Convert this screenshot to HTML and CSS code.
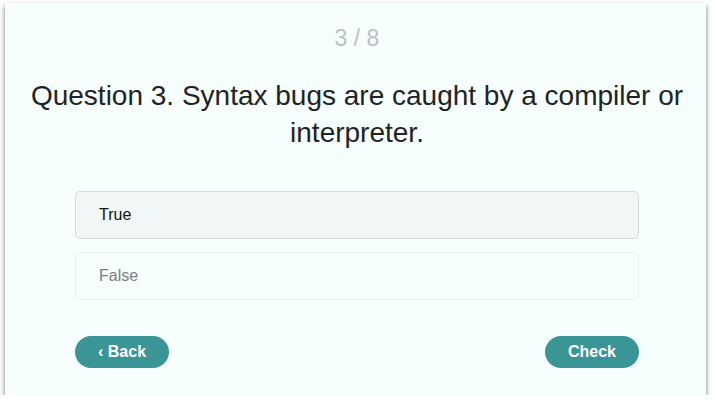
FILE: index.html
```html
<!DOCTYPE html>
<html lang="en">
<head>
    <meta charset="UTF-8">
    <meta name="viewport" content="width=device-width, initial-scale=1.0">
    <title>Quiz</title>
    <link rel="stylesheet" href="styles.css">
</head>
<body>
    <section class="quiz-card">
        <p class="progress">3 / 8</p>
        <h2 class="question">Question 3. Syntax bugs are caught by a compiler or interpreter.</h2>
        <div class="answers">
            <button type="button" class="answer selected">True</button>
            <button type="button" class="answer">False</button>
        </div>
        <div class="nav-btn">
            <button type="button" class="pill">&lsaquo; Back</button>
            <button type="button" class="pill">Check</button>
        </div>
    </section>
</body>
</html>
```

FILE: styles.css
```css
*{
    margin: 0;
    padding: 0;
    box-sizing: border-box;
}

body{
    background: #fff;
    font-family: "Liberation Sans", Arial, sans-serif;
    padding: 3px 8px 0 5px;
}

.quiz-card{
    width: 701px;
    height: 392px;
    background: #f6fefe;
    box-shadow: 0 3px 5px rgba(0, 0, 0, 0.55);
    padding: 22px 67px 0 70px;
}

.progress{
    text-align: center;
    color: #bcc2c2;
    font-size: 23px;
    line-height: 26px;
}

.question{
    margin-top: 26px;
    margin-left: -60px;
    margin-right: -60px;
    text-align: center;
    font-weight: normal;
    font-size: 28px;
    line-height: 37px;
    color: #1f2324;
}

.answers{
    margin-top: 40px;
    display: flex;
    flex-direction: column;
    gap: 13px;
}

.answer{
    height: 48px;
    text-align: left;
    padding: 0 23px;
    font-family: inherit;
    font-size: 16px;
    color: #7a7e7e;
    background: transparent;
    border: 1px solid #e6eeee;
    border-radius: 5px;
}

.answer.selected{
    color: #111;
    background: #f1f6f6;
    border-color: #d3dbdb;
}

.nav-btn{
    margin-top: 36px;
    display: flex;
    justify-content: space-between;
}

.pill{
    height: 32px;
    padding: 0 23px;
    font-family: inherit;
    font-size: 16px;
    font-weight: bold;
    color: #fff;
    background: #3a9597;
    border: none;
    border-radius: 16px;
}
```
